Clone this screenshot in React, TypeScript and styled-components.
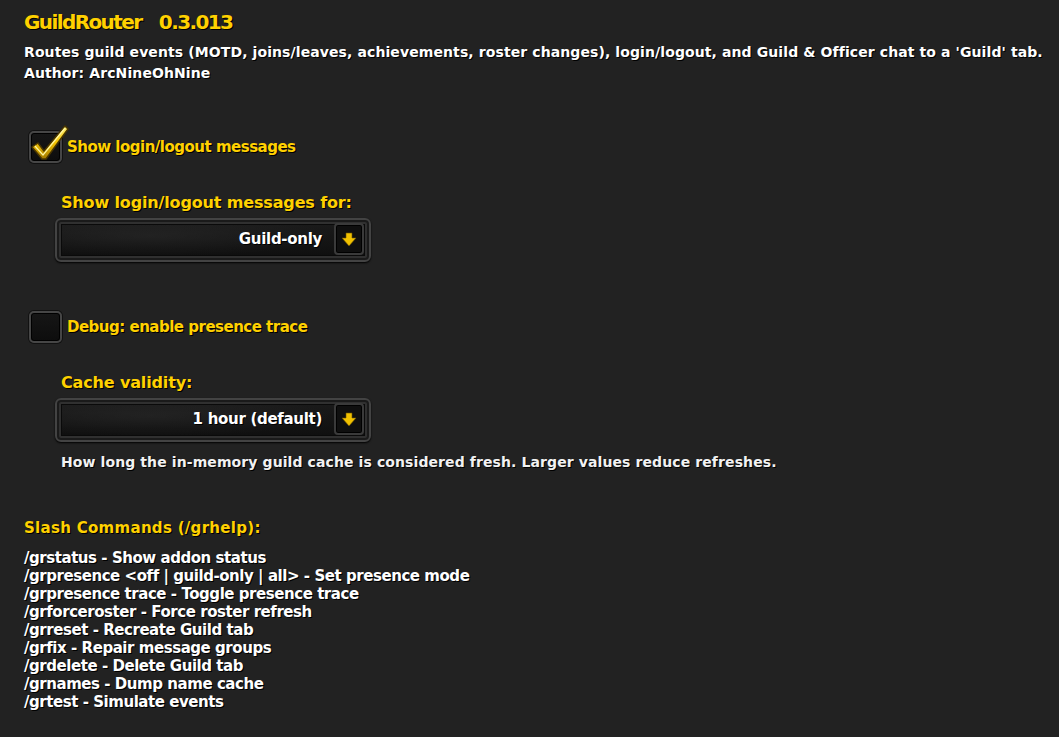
import styled, { createGlobalStyle } from "styled-components";

const GlobalStyle = createGlobalStyle`
  html, body {
    margin: 0;
    padding: 0;
    background: #222222;
  }
  body {
    font-family: "DejaVu Sans", "Liberation Sans", sans-serif;
    color: #ffffff;
  }
`;

const Page = styled.div`
  width: 1059px;
  height: 737px;
  box-sizing: border-box;
  padding: 9px 0 0 24px;
  background: #222222;
  display: flex;
  flex-direction: column;
`;

const Title = styled.h1`
  margin: 0;
  font-size: 20px;
  font-weight: bold;
  color: #ffd100;
  line-height: 26px;
  letter-spacing: -1.6px;
  word-spacing: 12px;
  text-shadow: 1px 1px 0 #000;
`;

const Info = styled.p`
  margin: 0;
  font-size: 14px;
  font-weight: bold;
  line-height: 21px;
  letter-spacing: 0.1px;
  text-shadow: 1px 1px 0 #000;
  &:first-of-type {
    margin-top: 7px;
  }
`;

const CheckRow = styled.label<{ $top: number }>`
  display: flex;
  align-items: center;
  gap: 5px;
  height: 32px;
  margin-top: ${(p) => p.$top}px;
  margin-left: 5px;
`;

const Box = styled.span`
  position: relative;
  width: 33px;
  height: 32px;
  box-sizing: border-box;
  border-radius: 5px;
  border: 2px solid #464646;
  background: linear-gradient(#161616, #0d0d0d);
  box-shadow: inset 0 0 0 1px #000, 0 0 0 1px #111;
  svg {
    position: absolute;
    left: -2px;
    top: -9px;
  }
`;

const CheckLabel = styled.span`
  font-size: 15px;
  font-weight: bold;
  color: #ffd100;
  letter-spacing: -0.5px;
  text-shadow: 1px 1px 0 #000;
`;

const Group = styled.div<{ $top: number }>`
  margin-top: ${(p) => p.$top}px;
  margin-left: 31px;
  display: flex;
  flex-direction: column;
`;

const GroupLabel = styled.div`
  font-size: 16px;
  font-weight: bold;
  color: #ffd100;
  letter-spacing: -0.15px;
  line-height: 22px;
  padding-left: 6px;
  text-shadow: 1px 1px 0 #000;
`;

const Dropdown = styled.div`
  margin-top: 4px;
  width: 316px;
  height: 44px;
  box-sizing: border-box;
  border-radius: 6px;
  border: 2px solid #434343;
  background:
    radial-gradient(ellipse at 30% 40%, rgba(255,255,255,0.05), transparent 60%),
    linear-gradient(rgba(255,255,255,0.03), rgba(0,0,0,0.3)),
    #141414;
  box-shadow: inset 0 0 0 2px #1a1a1a, inset 0 0 0 4px #303030, inset 0 0 0 5px #0a0a0a, 0 1px 2px #000;
  display: flex;
  align-items: center;
  justify-content: flex-end;
  padding: 0 5px 0 8px;
  gap: 12px;
`;

const Value = styled.span`
  font-size: 15px;
  font-weight: bold;
  color: #ffffff;
  letter-spacing: -0.3px;
  margin-top: -3px;
  text-shadow: 1px 1px 0 #000;
`;

const Arrow = styled.span`
  width: 30px;
  height: 32px;
  margin-top: -2px;
  box-sizing: border-box;
  border-radius: 4px;
  border: 2px solid #3a3a3a;
  background: #0f0f0f;
  box-shadow: inset 0 0 0 1px #000;
  display: flex;
  align-items: center;
  justify-content: center;
`;

const Hint = styled.p`
  margin: 12px 0 0 6px;
  font-size: 14px;
  font-weight: bold;
  line-height: 17px;
  color: #f2f2f2;
  letter-spacing: 0.1px;
  text-shadow: 1px 1px 0 #000;
`;

const Heading = styled.h2`
  margin: 46px 0 0 0;
  font-size: 15px;
  font-weight: bold;
  color: #ffd100;
  letter-spacing: 0.3px;
  line-height: 22px;
  text-shadow: 1px 1px 0 #000;
`;

const Commands = styled.ul`
  list-style: none;
  margin: 10px 0 0 0;
  padding: 0;
`;

const Command = styled.li`
  font-size: 15px;
  font-weight: bold;
  line-height: 18px;
  letter-spacing: -0.45px;
  text-shadow: 1px 1px 0 #000;
`;

function Check() {
  return (
    <svg width="42" height="40" viewBox="0 0 42 40">
      <defs>
        <linearGradient id="gold" x1="0" y1="0" x2="0" y2="1">
          <stop offset="0" stopColor="#fff27a" />
          <stop offset="0.5" stopColor="#f5c400" />
          <stop offset="1" stopColor="#a07800" />
        </linearGradient>
      </defs>
      <path
        d="M3 23 L9 19 L15 27 L36 2 L39 5 L17 35 L13 35 Z"
        fill="url(#gold)"
        stroke="#4a3600"
        strokeWidth="1.5"
        strokeLinejoin="round"
      />
      <path d="M6 22 L14 31 L36 4" fill="none" stroke="#fff6a0" strokeWidth="1.2" />
    </svg>
  );
}

function DownArrow() {
  return (
    <svg width="16" height="15" viewBox="0 0 16 15">
      <path d="M5 1 H11 V6 H15 L8 14 L1 6 H5 Z" fill="#f0c000" stroke="#6a5000" strokeWidth="0.6" />
    </svg>
  );
}

function Select({ value }: { value: string }) {
  return (
    <Dropdown>
      <Value>{value}</Value>
      <Arrow>
        <DownArrow />
      </Arrow>
    </Dropdown>
  );
}

const commands = [
  "/grstatus - Show addon status",
  "/grpresence <off | guild-only | all> - Set presence mode",
  "/grpresence trace - Toggle presence trace",
  "/grforceroster - Force roster refresh",
  "/grreset - Recreate Guild tab",
  "/grfix - Repair message groups",
  "/grdelete - Delete Guild tab",
  "/grnames - Dump name cache",
  "/grtest - Simulate events",
];

export default function App() {
  return (
    <>
      <GlobalStyle />
      <Page>
        <Title>GuildRouter 0.3.013</Title>
        <Info>
          Routes guild events (MOTD, joins/leaves, achievements, roster changes), login/logout, and Guild &amp; Officer chat to a 'Guild' tab.
        </Info>
        <Info>Author: ArcNineOhNine</Info>

        <CheckRow $top={47}>
          <Box>
            <Check />
          </Box>
          <CheckLabel>Show login/logout messages</CheckLabel>
        </CheckRow>

        <Group $top={29}>
          <GroupLabel>Show login/logout messages for:</GroupLabel>
          <Select value="Guild-only" />
        </Group>

        <CheckRow $top={49}>
          <Box />
          <CheckLabel>Debug: enable presence trace</CheckLabel>
        </CheckRow>

        <Group $top={29}>
          <GroupLabel>Cache validity:</GroupLabel>
          <Select value="1 hour (default)" />
          <Hint>How long the in-memory guild cache is considered fresh. Larger values reduce refreshes.</Hint>
        </Group>

        <Heading>Slash Commands (/grhelp):</Heading>
        <Commands>
          {commands.map((c) => (
            <Command key={c}>{c}</Command>
          ))}
        </Commands>
      </Page>
    </>
  );
}
